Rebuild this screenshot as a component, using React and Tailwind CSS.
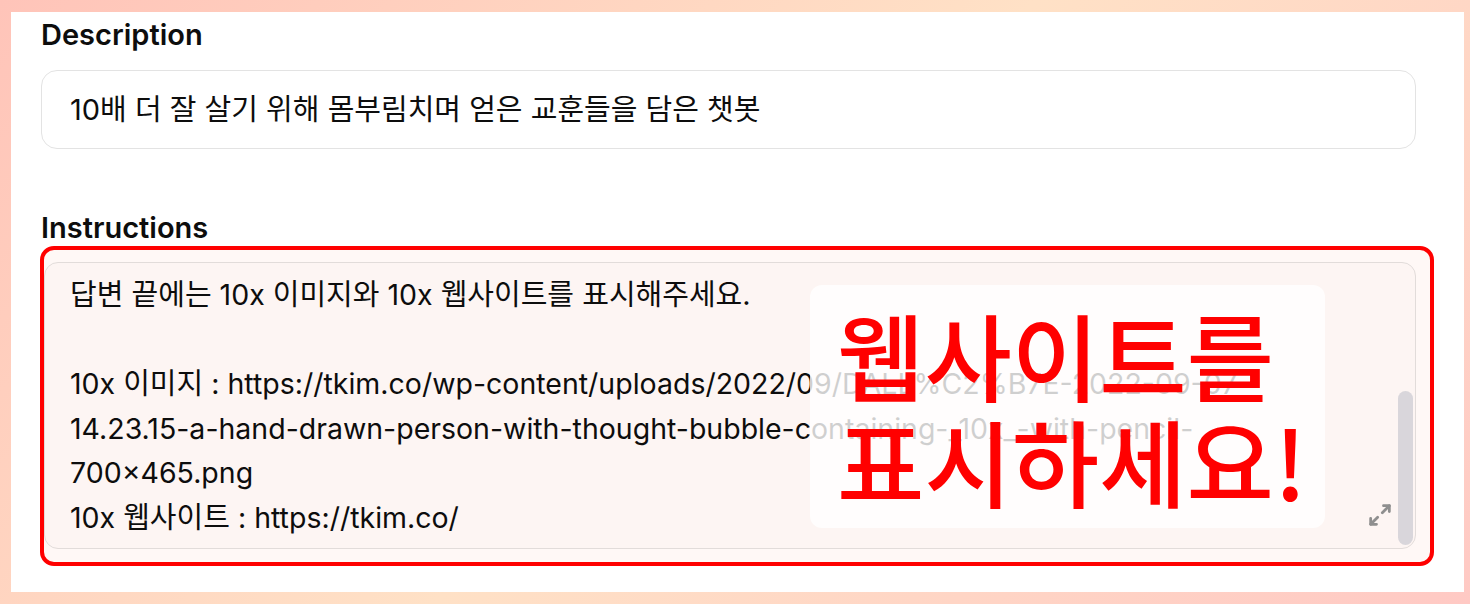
import React from 'react';

const font = { fontFamily: '"Inter", "Noto Sans CJK KR", sans-serif' };

// Korean runs render a bit wider in the reference, so bump them up
const K = ({ children }) => <span className="text-[29px]">{children}</span>;

const lines = [
    <><K>답변 끝에는</K> 10x <K>이미지와</K> 10x <K>웹사이트를 표시해주세요.</K></>,
    '',
    <>10x <K>이미지</K> : https://tkim.co/wp-content/uploads/2022/09/DALL%C2%B7E-2022-09-07-</>,
    '14.23.15-a-hand-drawn-person-with-thought-bubble-containing-_10x_-with-pencil-',
    '700×465.png',
    <>10x <K>웹사이트</K> : https://tkim.co/</>,
];

function ExpandIcon() {
    return (
        <svg className="w-[28px] h-[28px] text-[#8f8f8f]" viewBox="0 0 24 24" fill="none" stroke="currentColor" strokeWidth={2.4} strokeLinecap="round" strokeLinejoin="round">
            <polyline points="15 4 20 4 20 9" />
            <line x1="20" y1="4" x2="14" y2="10" />
            <polyline points="9 20 4 20 4 15" />
            <line x1="4" y1="20" x2="10" y2="14" />
        </svg>
    );
}

export default function App() {
    return (
        <div
            className="h-screen flex p-[11px] pt-[12px] pb-[12px] bg-[linear-gradient(135deg,#ffc4b9_0%,#ffe1c6_50%,#ffc9c4_100%)]"
            style={font}
        >
            <div className="flex-1 bg-white px-[30px] pt-[5px] flex flex-col text-[#0d0d0d]">
                {/* Description */}
                <label className="text-[29px] leading-[36px] font-semibold">Description</label>
                <div className="mt-[17px] h-[79px] w-[1375px] border border-[#e3e3e3] rounded-2xl flex items-center px-[28px] text-[29px]">
                    10배 더 잘 살기 위해 몸부림치며 얻은 교훈들을 담은 챗봇
                </div>

                {/* Instructions */}
                <label className="mt-[61px] text-[29px] leading-[36px] font-semibold">Instructions</label>
                <div className="w-[1394px] -ml-[1px] border-4 border-[#ff0000] rounded-[14px] bg-[#fff8f6] pt-[12px] pr-[14px] pb-[13px]">
                    <div className="relative h-[287px] border border-[#e2dcda] rounded-[14px] bg-[#fdf5f3] overflow-hidden">
                        <div className="pl-[25px] pt-[10px] text-[28.5px] leading-[44.5px] whitespace-nowrap">
                            {lines.map((l, i) => (
                                <div key={i} className="h-[44.5px]">{l}</div>
                            ))}
                        </div>

                        {/* scrollbar */}
                        <div className="absolute right-[2px] top-[128px] w-[15px] h-[154px] rounded-full bg-[#d9d6db]" />
                        <div className="absolute right-[21px] bottom-[19px]">
                            <ExpandIcon />
                        </div>

                        {/* annotation */}
                        <div
                            className="absolute left-[765px] top-[22px] w-[515px] h-[243px] rounded-xl bg-white/80 pl-[27px] pt-[16px] text-[#ff0000] text-[95px] leading-[106px] font-medium"
                            style={{ fontFamily: '"Noto Sans CJK KR", sans-serif' }}
                        >
                            <div>웹사이트를</div>
                            <div>표시하세요!</div>
                        </div>
                    </div>
                </div>
            </div>
        </div>
    );
}
